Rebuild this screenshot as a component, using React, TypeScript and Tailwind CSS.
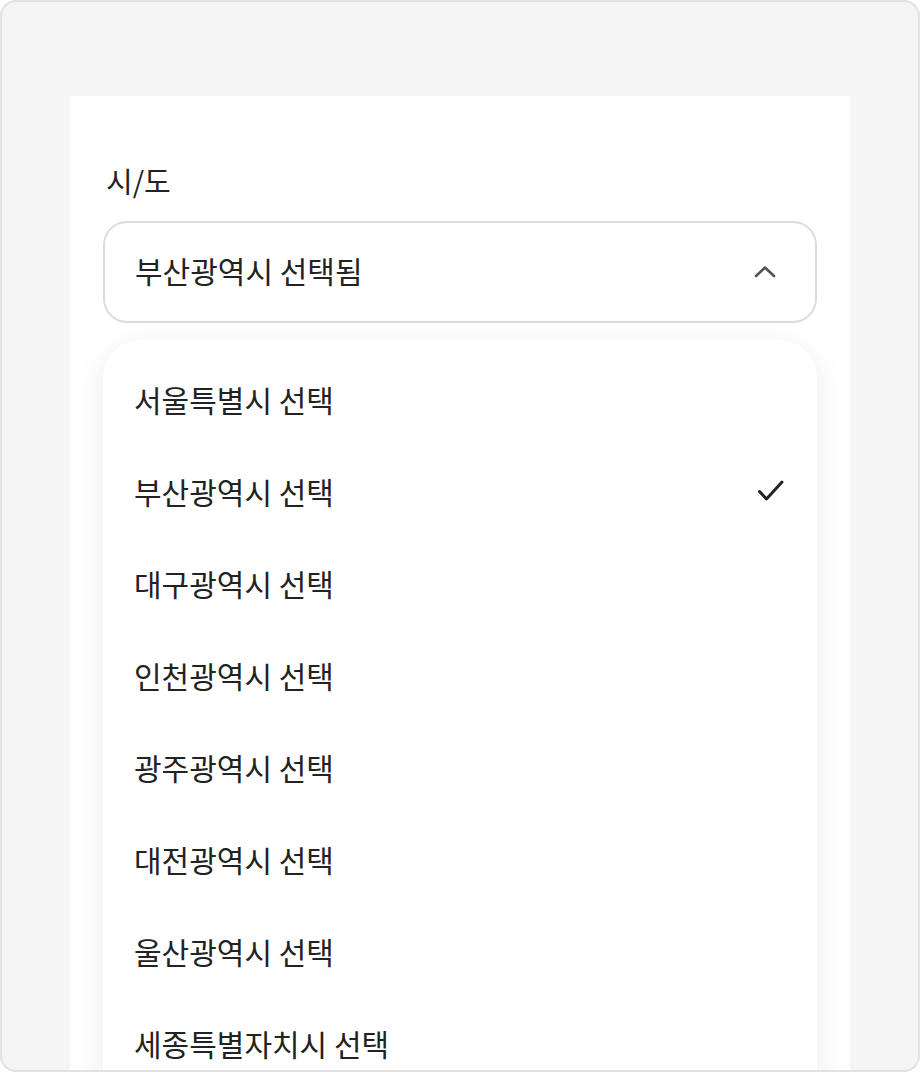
const regions = [
  "서울특별시 선택",
  "부산광역시 선택",
  "대구광역시 선택",
  "인천광역시 선택",
  "광주광역시 선택",
  "대전광역시 선택",
  "울산광역시 선택",
  "세종특별자치시 선택",
]

function ChevronUp() {
  return (
    <svg width="24" height="14" viewBox="0 0 24 14" fill="none" className="text-[#4b5563]">
      <path d="M3 12 12 3.5 21 12" stroke="currentColor" strokeWidth="2.6" strokeLinecap="round" strokeLinejoin="round" />
    </svg>
  )
}

function Check() {
  return (
    <svg width="28" height="24" viewBox="0 0 28 24" fill="none" className="text-[#222222]">
      <path d="M2.5 12.5 9.5 20 25 3" stroke="currentColor" strokeWidth="3" strokeLinecap="round" strokeLinejoin="round" />
    </svg>
  )
}

export default function App() {
  const selected = "부산광역시 선택"

  return (
    <div
      className="w-[920px] h-[1072px] overflow-hidden rounded-[16px] border-2 border-[#e2e2e2] bg-[#f5f5f5] pt-[94px] px-[68px]"
      style={{ fontFamily: '"Noto Sans CJK KR", "Noto Sans", sans-serif' }}
    >
      <div className="bg-white px-[33px] pt-[63px] pb-[60px]">
        <label className="block text-[29px] leading-[42px] text-[#222222] pl-[3px]">시/도</label>

        <button
          type="button"
          className="mt-[20px] w-full h-[102px] flex items-center justify-between rounded-[24px] border-2 border-[#dcdce2] bg-white pl-[30px] pr-[38px] pb-[3px] text-left"
        >
          <span className="text-[30px] text-[#222222]">부산광역시 선택됨</span>
          <ChevronUp />
        </button>

        <ul className="mt-[17px] rounded-[38px] bg-white pt-[13px] pb-[60px] shadow-[0_8px_32px_rgba(0,0,0,0.08)]">
          {regions.map((name) => (
            <li
              key={name}
              className="h-[92px] flex items-center justify-between pl-[31px] pr-[32px] text-[30px] text-[#222222]"
            >
              <span>{name}</span>
              {name === selected && <Check />}
            </li>
          ))}
        </ul>
      </div>
    </div>
  )
}
